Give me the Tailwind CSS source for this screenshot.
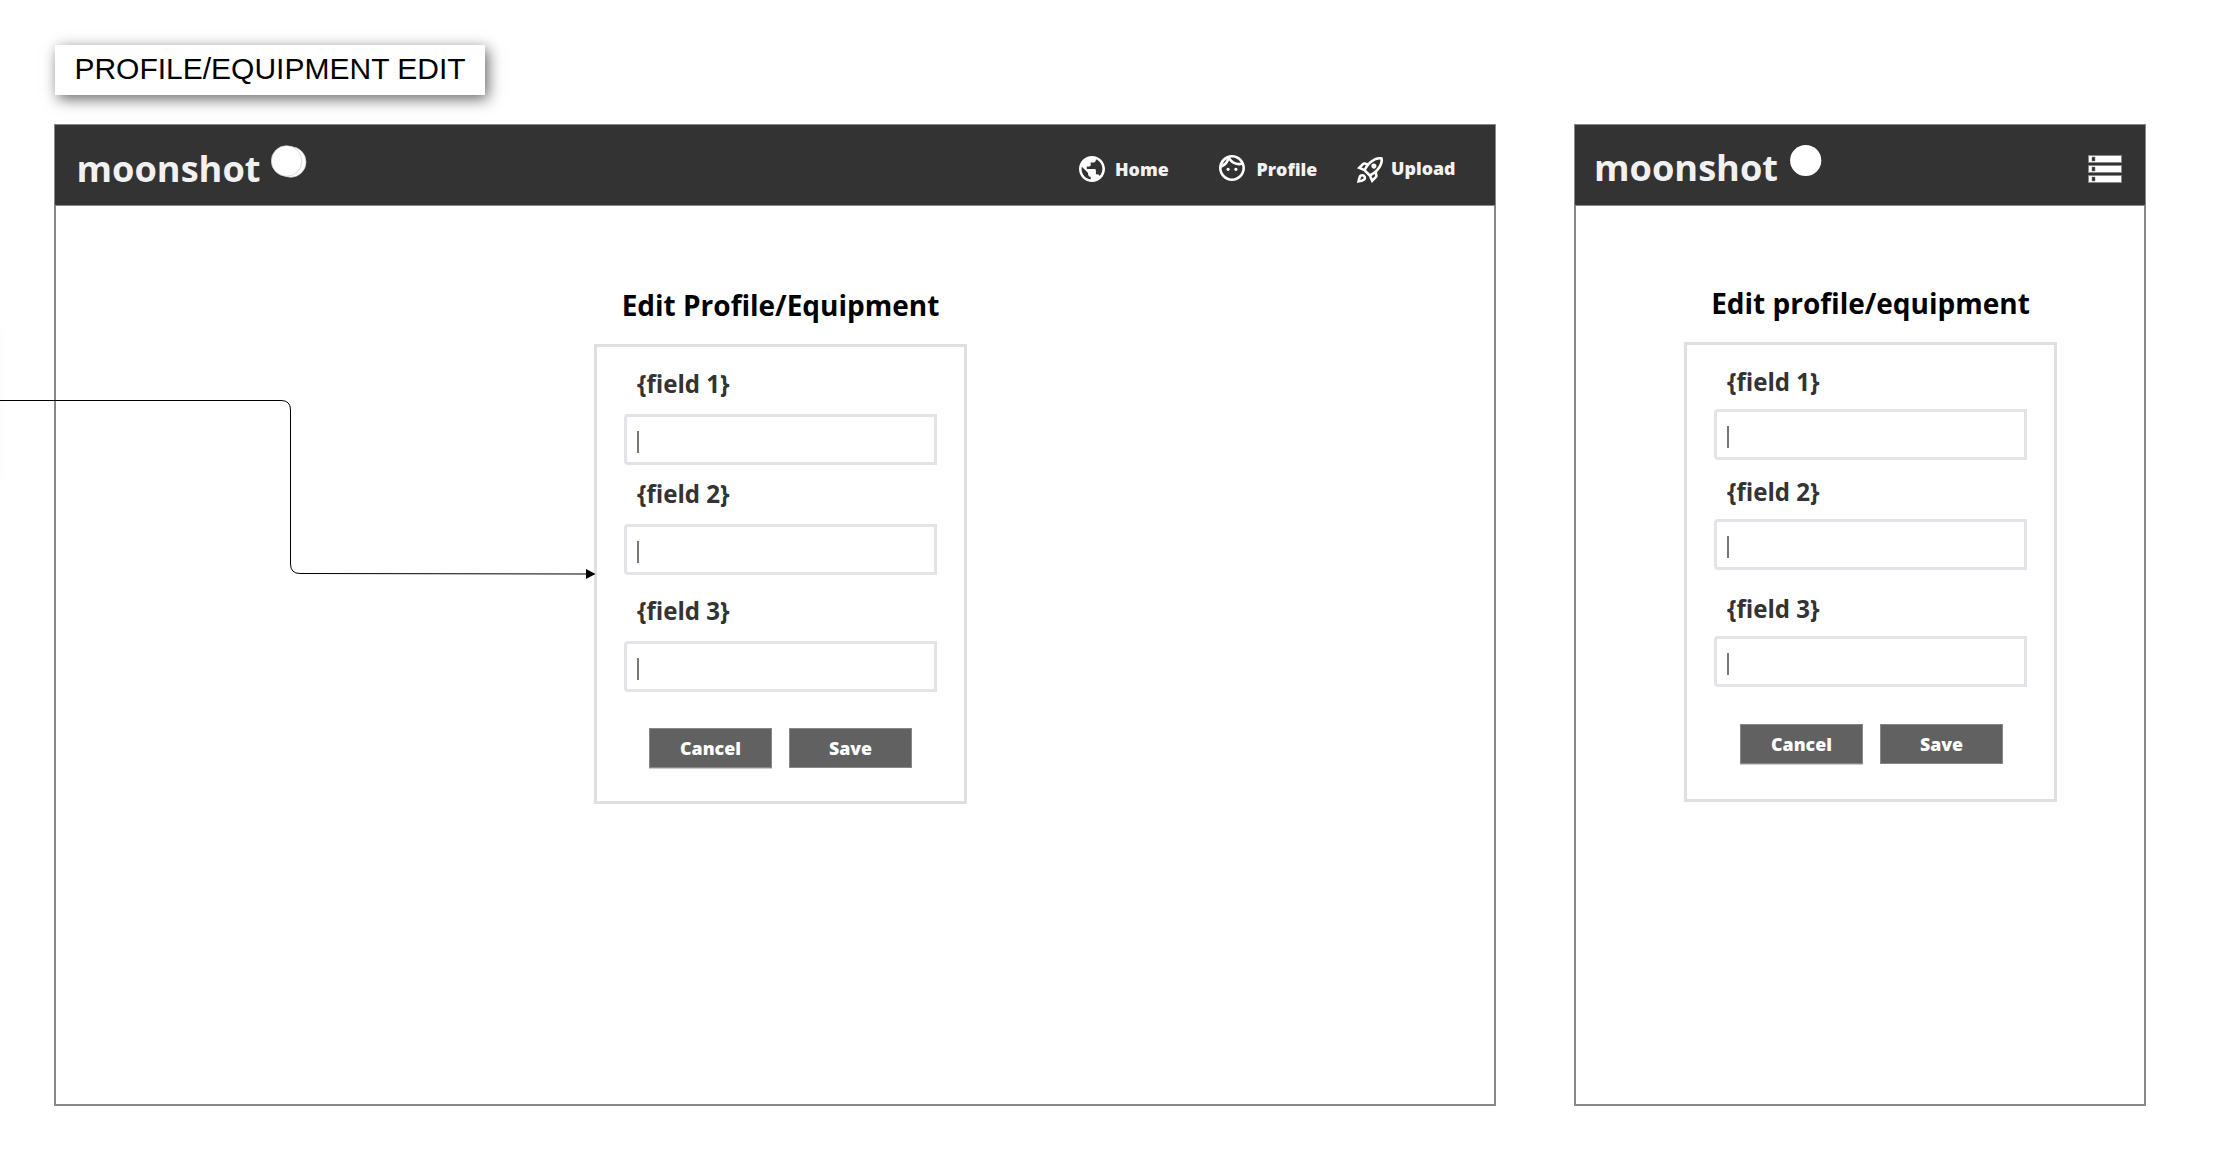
<!DOCTYPE html>
<html lang="en">
<head>
<meta charset="utf-8">
<title>Profile/Equipment Edit</title>
<script src="https://cdn.jsdelivr.net/npm/@tailwindcss/browser@4"></script>
</head>
<body class="relative h-[1157px] w-[2219px] overflow-hidden bg-white font-['Open_Sans',sans-serif] text-black">
<div class="absolute top-[330px] -left-[20px] h-[150px] w-[16px] shadow-[0_0_14px_rgba(0,0,0,0.06)]"></div>
<main class="flex flex-col items-start pt-[45px] pl-[54px]">
  <h1 class="ml-px flex h-[50px] w-[430px] items-center justify-center bg-white pb-[2px] font-['Liberation_Sans',sans-serif] text-[30px] leading-[48px] whitespace-nowrap shadow-[3px_4px_14px_rgba(0,0,0,0.6)]">PROFILE/EQUIPMENT EDIT</h1>

  <div class="mt-[29px] flex gap-[78px]">
    <!-- Desktop layout -->
    <section class="h-[982px] w-[1442px] border-2 border-[#888]">
      <header class="-mx-[2px] -mt-[2px] flex h-[82px] items-start border border-[#888] bg-[#333] text-[#f1f1f1]">
        <span class="mt-[19px] ml-[21.5px] w-[194.5px] text-[36.2px] leading-[48px] font-bold">moonshot</span>
        <svg class="mt-[19px] h-[34px] w-[37px]" viewBox="0 0 37 34" fill="#fff" stroke="#ccc" stroke-width=".7"><ellipse cx="19.8" cy="18" rx="15.2" ry="15.3"/><ellipse cx="15.6" cy="17" rx="15.3" ry="15.3"/></svg>
        <nav class="mt-[30px] ml-[771px] flex text-[17.8px] leading-[28px] font-extrabold">
          <a class="flex w-[140px]">
            <svg class="mt-px mr-[10px] h-[26px] w-[26px]" viewBox="2 2 20 20" fill="#fff"><path d="M12 2C6.48 2 2 6.48 2 12s4.48 10 10 10 10-4.480 10-10S17.520 2 12 2zm-1 17.930c-3.950-.490-7-3.850-7-7.930 0-.620.080-1.210.210-1.790L9 15v1c0 1.100.900 2 2 2v1.930zm6.900-2.540c-.260-.810-1-1.390-1.900-1.390h-1v-3c0-.550-.450-1-1-1H8v-2h2c.550 0 1-.450 1-1V7h2c1.100 0 2-.900 2-2v-.410c2.930 1.190 5 4.060 5 7.410 0 2.080-.800 3.970-2.100 5.390z"/></svg>
            <span>Home</span>
          </a>
          <a class="flex w-[138px]">
            <svg class="mr-[11.5px] h-[26px] w-[26px]" viewBox="2 2 20 20" fill="#fff"><path fill-rule="evenodd" d="M10.25 13c0 .69-.56 1.250-1.250 1.250S7.750 13.690 7.750 13s.56-1.250 1.250-1.250 1.250.56 1.250 1.250zM15 11.750c-.69 0-1.250.56-1.250 1.250s.56 1.250 1.250 1.250 1.250-.56 1.250-1.250-.56-1.250-1.250-1.250zm7 .250c0 5.520-4.480 10-10 10S2 17.520 2 12 6.480 2 12 2s10 4.480 10 10zM10.660 4.120C12.060 6.440 14.600 8 17.500 8c.46 0 .91-.05 1.340-.12C17.440 5.560 14.900 4 12 4c-.46 0-.91.05-1.340.12zM4.420 9.470a8.046 8.046 0 0 0 3.660-4.440 8.046 8.046 0 0 0-3.660 4.440zM20 12c0-.78-.12-1.530-.33-2.240-.7.15-1.420.24-2.170.24a10 10 0 0 1-7.760-3.690A10.016 10.016 0 0 1 4 11.860c.01.04 0 .09 0 .14 0 4.410 3.590 8 8 8s8-3.590 8-8z"/></svg>
            <span>Profile</span>
          </a>
          <a class="flex">
            <svg class="mt-[2px] mr-[8px] h-[26px] w-[26px]" viewBox="2 2 20 20" fill="#fff"><path fill-rule="evenodd" d="M6 15c-.83 0-1.580.34-2.120.88C2.700 17.060 2 22 2 22s4.940-.7 6.120-1.880A2.996 2.996 0 0 0 6 15zm.71 3.710c-.28.28-2.170.76-2.170.76s.47-1.880.76-2.170c.17-.19.42-.3.7-.3a1.003 1.003 0 0 1 .71 1.710zm10.710-5.060c6.360-6.360 4.240-11.310 4.240-11.310S16.710.22 10.350 6.580l-2.490-.5a2.030 2.030 0 0 0-1.810.55L2 10.690l5 2.140L11.170 17l2.140 5 4.050-4.050c.47-.47.68-1.150.55-1.810l-.49-2.490zM7.410 10.830l-1.910-.82 1.970-1.970 1.440.29c-.57.83-1.080 1.700-1.500 2.500zm6.580 7.670-.82-1.910c.8-.42 1.670-.93 2.490-1.500l.29 1.440-1.960 1.970zM16 12.240c-1.320 1.320-3.380 2.400-4.040 2.730l-2.930-2.930c.32-.65 1.400-2.710 2.730-4.040 4.680-4.680 8.230-3.990 8.230-3.990s.69 3.550-3.990 8.230zM15 11c1.100 0 2-.9 2-2s-.9-2-2-2-2 .9-2 2 .9 2 2 2z"/></svg>
            <span class="-mt-px">Upload</span>
          </a>
        </nav>
      </header>
      <form class="mt-[79px] ml-[538px] w-[373px] text-[#333]">
        <h2 class="mb-[19px] text-center text-[28px] leading-[40px] font-bold whitespace-nowrap text-black">Edit Profile/Equipment</h2>
        <div class="h-[460px] border-3 border-[#e0e0e0] px-[27px] pt-[21px]">
          <label class="block pl-[13px] text-[24.1px] leading-[32px] font-bold">{field 1}</label>
          <div class="mt-[14px] h-[51px] rounded-l-[4px] border-3 border-[#e3e3e8] pt-[14px] pl-[10px]"><div class="h-[22px] w-[2px] bg-[#777]"></div></div>
          <label class="mt-[13px] block pl-[13px] text-[24.1px] leading-[32px] font-bold">{field 2}</label>
          <div class="mt-[14px] h-[51px] rounded-l-[4px] border-3 border-[#e3e3e8] pt-[14px] pl-[10px]"><div class="h-[22px] w-[2px] bg-[#777]"></div></div>
          <label class="mt-[20px] block pl-[13px] text-[24.1px] leading-[32px] font-bold">{field 3}</label>
          <div class="mt-[14px] h-[51px] rounded-l-[4px] border-3 border-[#e3e3e8] pt-[14px] pl-[10px]"><div class="h-[22px] w-[2px] bg-[#777]"></div></div>
          <div class="mt-[36px] flex gap-[17px] pl-[25px] text-[17.8px] leading-[38px] font-extrabold text-white">
            <button type="button" class="h-[40px] w-[123px] border border-[#888] bg-[#616161] shadow-[0_1px_0_#ccc]">Cancel</button>
            <button type="button" class="h-[40px] w-[123px] border border-[#888] bg-[#616161]">Save</button>
          </div>
        </div>
      </form>
    </section>

    <!-- Mobile layout -->
    <section class="h-[982px] w-[572px] border-2 border-[#888]">
      <header class="-mx-[2px] -mt-[2px] flex h-[82px] items-start border border-[#888] bg-[#333] text-[#f1f1f1]">
        <span class="mt-[18px] ml-[19px] w-[195.5px] text-[36.2px] leading-[48px] font-bold">moonshot</span>
        <svg class="mt-[19px] h-[34px] w-[34px]" viewBox="0 0 34 34" fill="#fff"><circle cx="15.7" cy="16.5" r="15.6"/></svg>
        <svg class="mt-[30px] ml-[264.5px] h-[29px] w-[36px]" viewBox="0 0 36 29"><g fill="#fff" stroke="#888"><path d="M.5.500h33v7h-33zM.5 10.500h33v7h-33zM.5 20.500h33v7h-33z"/></g><path d="M4 2h3v4h-3zM4 12h3v4h-3zM4 22h3v4h-3z" fill="#333" stroke="#777" stroke-width=".5"/></svg>
      </header>
      <form class="mt-[77px] ml-[108px] w-[373px] text-[#333]">
        <h2 class="mb-[19px] text-center text-[28px] leading-[40px] font-bold whitespace-nowrap text-black">Edit profile/equipment</h2>
        <div class="h-[460px] border-3 border-[#e0e0e0] px-[27px] pt-[21px]">
          <label class="block pl-[13px] text-[24.1px] leading-[32px] font-bold">{field 1}</label>
          <div class="mt-[11px] h-[51px] rounded-l-[4px] border-3 border-[#e3e3e8] pt-[14px] pl-[10px]"><div class="h-[22px] w-[2px] bg-[#777]"></div></div>
          <label class="mt-[16px] block pl-[13px] text-[24.1px] leading-[32px] font-bold">{field 2}</label>
          <div class="mt-[11px] h-[51px] rounded-l-[4px] border-3 border-[#e3e3e8] pt-[14px] pl-[10px]"><div class="h-[22px] w-[2px] bg-[#777]"></div></div>
          <label class="mt-[23px] block pl-[13px] text-[24.1px] leading-[32px] font-bold">{field 3}</label>
          <div class="mt-[11px] h-[51px] rounded-l-[4px] border-3 border-[#e3e3e8] pt-[14px] pl-[10px]"><div class="h-[22px] w-[2px] bg-[#777]"></div></div>
          <div class="mt-[37px] flex gap-[17px] pl-[26px] text-[17.8px] leading-[38px] font-extrabold text-white">
            <button type="button" class="h-[40px] w-[123px] border border-[#888] bg-[#616161] shadow-[0_1px_0_#ccc]">Cancel</button>
            <button type="button" class="h-[40px] w-[123px] border border-[#888] bg-[#616161]">Save</button>
          </div>
        </div>
      </form>
    </section>
  </div>
</main>
<!-- Flow connector into the edit form -->
<svg class="absolute top-[380px] left-0 h-[220px] w-[620px]" viewBox="0 0 620 220" fill="none"><path d="M0 20.500H281Q290.500 20.500 290.500 30V184Q290.500 193.500 300 193.500L587 194" stroke="#000"/><path d="M586 189L595.500 194L586 199z" fill="#000"/></svg>
</body>
</html>
